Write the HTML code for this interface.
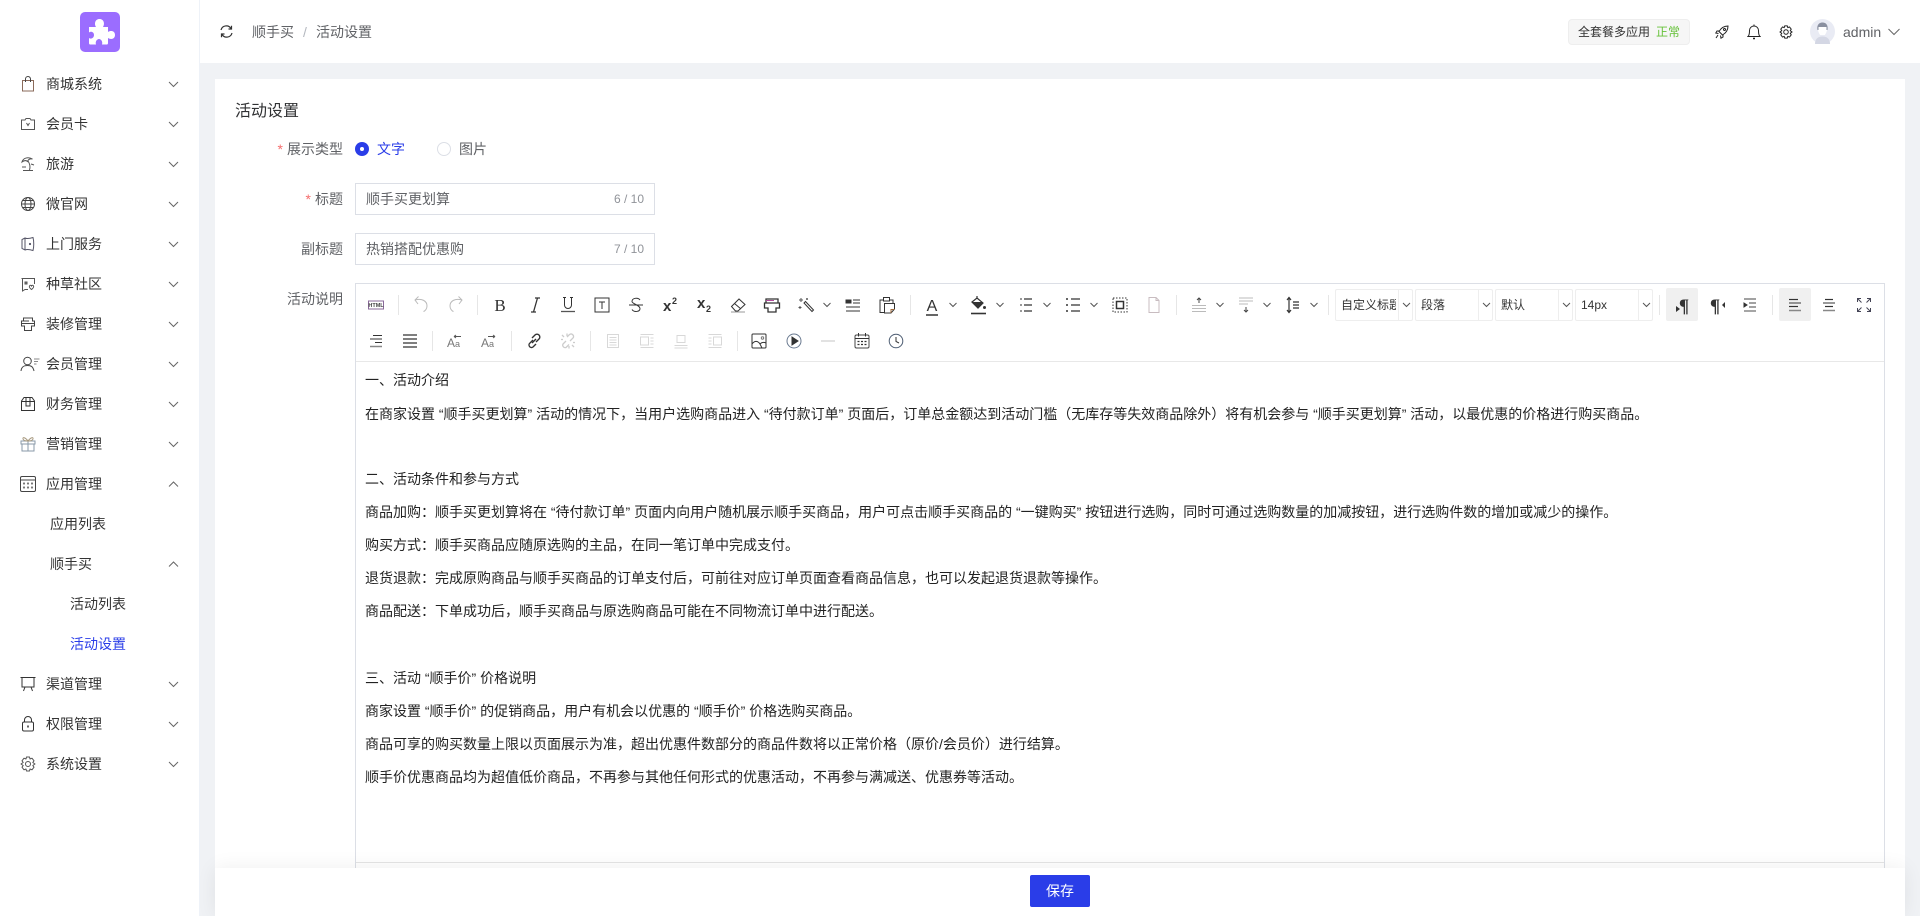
<!DOCTYPE html>
<html lang="zh"><head><meta charset="utf-8"><title>活动设置</title>
<style>
*{box-sizing:border-box}
html,body{margin:0;padding:0;width:1920px;height:916px;overflow:hidden;background:#f0f2f5;font-family:"Liberation Sans","Noto Sans CJK SC",sans-serif;font-size:14px;color:#303133}
.abs{position:absolute}
#side{position:absolute;left:0;top:0;width:200px;height:916px;background:#fff;border-right:1px solid #eef2f8}
#logo{position:absolute;left:80px;top:12px;width:40px;height:40px;border-radius:5px;background:#9b6dff}
.mi{position:absolute;left:0;width:199px;height:40px;line-height:40px;color:#333;font-size:14px;white-space:nowrap}
.mi span{position:absolute;top:0}
.mi svg{position:absolute}
.mi .ic{left:20px;top:12px}
.mi .ch{left:168px;top:16px}
#head{position:absolute;left:200px;top:0;width:1720px;height:63px;background:#fff}
#card{position:absolute;left:215px;top:79px;width:1690px;height:837px;background:#fff}
.lb{position:absolute;right:1577px;color:#606266;font-size:14px;line-height:20px;white-space:nowrap}
.lb i{color:#f56c6c;font-style:normal;margin-right:4px}
.inp{position:absolute;left:355px;width:300px;height:32px;border:1px solid #dcdfe6;background:#fff;color:#606266;line-height:30px;padding-left:10px}
.inp b{position:absolute;right:10px;top:0;font-weight:normal;font-size:12px;color:#909399}
#ed{position:absolute;left:355px;top:283px;width:1530px;height:633px;border:1px solid #dcdfe6;background:#fff}
#ed .bar{position:absolute;left:0;top:77px;width:100%;height:1px;background:#e8e8e8}
#ed .bot{position:absolute;left:0;top:578px;width:100%;height:1px;background:#e5e5e5}
.p{position:absolute;left:365px;font-size:14px;line-height:20px;color:#222;white-space:nowrap}
.sel{position:absolute;top:289px;height:32px;border:1px solid #eee;border-radius:2px;background:#fff;font-size:12px;line-height:30px;color:#333;overflow:hidden}
.sel span{position:absolute;left:5px;top:0;width:55px;overflow:hidden;white-space:nowrap}
.sel u{position:absolute;right:13px;top:0;width:1px;height:30px;background:#eee;display:block}
.act{position:absolute;top:288px;width:32px;height:33px;background:#f0f0f0;border-radius:2px}
#foot{position:absolute;left:215px;top:868px;width:1690px;height:48px;background:#fff;box-shadow:0 0 20px rgba(0,0,0,.07)}
#save{position:absolute;left:815px;top:7px;width:60px;height:32px;background:#2a3de8;color:#fff;border-radius:2px;text-align:center;line-height:32px;font-size:14px}
svg text{font-family:"Liberation Sans","Noto Sans CJK SC",sans-serif}
</style></head><body>

<svg width="0" height="0" style="position:absolute"><defs>
<path id="cd" d="M1 2 L5.500 6.500 L10 2" fill="none" stroke="#666" stroke-width="1"/>
<path id="cu" d="M1 6.500 L5.500 2 L10 6.500" fill="none" stroke="#666" stroke-width="1"/>
</defs></svg>

<div id="side">
<div id="logo"><svg width="40" height="40" viewBox="0 0 40 40"><path fill="#fff" d="M9 15 H16 C14 12 15 7 19.500 7 C24 7 25 12 23 15 H28 V20 C31 18 35 19 35 23 C35 27 31 28 28 26 V31 C28 32 27.500 32.500 27 32.500 H22 C23 29.500 21 27 19 27 C17 27 15 29.500 16 32.500 H10 C9.500 32.500 9 32 9 31 V26 C11 27.500 14 26 14 23 C14 20 11 19 9 20.500 Z"/></svg></div>

<div class="mi" style="top:64px"><svg class="ic" width="16" height="16" viewBox="0 0 16 16" fill="none" stroke="#8a6a5a"><path d="M2.500 4.500 H13.500 V15 H2.500 Z"/><path d="M5.500 6 V3 A2.500 2.500 0 0 1 10.500 3 V6" stroke="#444"/></svg><span style="left:46px">商城系统</span><svg class="ch" width="11" height="9"><use href="#cd"/></svg></div>

<div class="mi" style="top:104px"><svg class="ic" width="16" height="16" viewBox="0 0 16 16" fill="none" stroke="#555"><path d="M1.500 4 H5 L6 2.500 H10 L11 4 H14.500 V13.500 H1.500 Z"/><path d="M6.500 7 L8 9.500 L9.500 7"/></svg><span style="left:46px">会员卡</span><svg class="ch" width="11" height="9"><use href="#cd"/></svg></div>

<div class="mi" style="top:144px"><svg class="ic" width="16" height="16" viewBox="0 0 16 16" fill="none" stroke="#555"><path d="M2 6 C3 2 8 0.500 12.500 3 C9.500 2.500 8 4 7.500 5.500 C6 4 4 4.500 2 6 Z"/><path d="M8 5 C10 8 10.500 11 9.500 14 M3 14.500 H13 M2 11 H6 M11 8 L14 9"/></svg><span style="left:46px">旅游</span><svg class="ch" width="11" height="9"><use href="#cd"/></svg></div>

<div class="mi" style="top:184px"><svg class="ic" width="16" height="16" viewBox="0 0 16 16" fill="none" stroke="#444"><circle cx="8" cy="8" r="6.500"/><ellipse cx="8" cy="8" rx="3" ry="6.500"/><path d="M1.500 8 H14.500 M2.500 4.500 H13.500 M2.500 11.500 H13.500"/></svg><span style="left:46px">微官网</span><svg class="ch" width="11" height="9"><use href="#cd"/></svg></div>

<div class="mi" style="top:224px"><svg class="ic" width="16" height="16" viewBox="0 0 16 16" fill="none" stroke="#556"><path d="M5 2 L2 3.500 V12.500 L5 14 C7 13 10 13.500 13 14.500 C14 11 14 5 13 1.500 C10 2.500 7 3 5 2 Z M5 2 V14"/><circle cx="10" cy="8" r=".6" fill="#333"/></svg><span style="left:46px">上门服务</span><svg class="ch" width="11" height="9"><use href="#cd"/></svg></div>

<div class="mi" style="top:264px"><svg class="ic" width="16" height="16" viewBox="0 0 16 16" fill="none" stroke="#555"><path d="M1.500 2.500 H14.500 V8 M8 13.500 H5 L2.500 15 V2.500"/><path d="M5 6 H7 V8 H5 Z" fill="#888"/><path d="M11.500 13.500 C9.500 12 9 11 9.500 10 C10 9 11 9 11.500 10 C12 9 13 9 13.500 10 C14 11 13.500 12 11.500 13.500 Z"/></svg><span style="left:46px">种草社区</span><svg class="ch" width="11" height="9"><use href="#cd"/></svg></div>

<div class="mi" style="top:304px"><svg class="ic" width="16" height="16" viewBox="0 0 16 16" fill="none" stroke="#444"><path d="M3.500 2 H12.500 V5 H14.500 V10 H11.500 V14.500 H4.500 V10 H1.500 V5 H3.500 Z"/><path d="M3.500 5 H9 M1.500 7.500 H14.500"/></svg><span style="left:46px">装修管理</span><svg class="ch" width="11" height="9"><use href="#cd"/></svg></div>

<div class="mi" style="top:344px"><svg class="ic" width="20" height="16" viewBox="0 0 20 16" fill="none" stroke="#444" style="left:20px"><circle cx="7.500" cy="5" r="3.800"/><path d="M1 15 C1.500 10.500 4 9.500 7.500 9.500 C11 9.500 13 10.500 14 15"/><path d="M14 3 H19.500 M14 5.500 H18 M14 8 H16.500" stroke="#888"/></svg><span style="left:46px">会员管理</span><svg class="ch" width="11" height="9"><use href="#cd"/></svg></div>

<div class="mi" style="top:384px"><svg class="ic" width="16" height="16" viewBox="0 0 16 16" fill="none" stroke="#333"><path d="M1.500 5 L4 1.500 H12 L14.500 5 V14.500 H1.500 Z M1.500 5.500 H14.500"/><path d="M6 1.500 V10 H10 V1.500"/></svg><span style="left:46px">财务管理</span><svg class="ch" width="11" height="9"><use href="#cd"/></svg></div>

<div class="mi" style="top:424px"><svg class="ic" width="16" height="16" viewBox="0 0 16 16" fill="none" stroke="#8a9aa8" style="left:20px"><path d="M1 5 H15 V8 H1 Z M2 8 V15 H14 V8 M8 5 V15"/><path d="M8 5 C5 1 2.500 1 3 3 C3.500 4.500 6 5 8 5 C10 5 12.500 4.500 13 3 C13.500 1 11 1 8 5 Z" stroke="#a89a80"/></svg><span style="left:46px">营销管理</span><svg class="ch" width="11" height="9"><use href="#cd"/></svg></div>

<div class="mi" style="top:464px"><svg class="ic" width="16" height="16" viewBox="0 0 16 16" fill="none" stroke="#444" style="left:20px"><rect x=".5" y=".5" width="15" height="15" rx="1.500"/><path d="M.5 4 H15.500"/><g fill="#777" stroke="none"><circle cx="4" cy="7.500" r="1.100"/><circle cx="8" cy="7.500" r="1.100"/><circle cx="12" cy="7.500" r="1.100"/><circle cx="4" cy="11.500" r="1.100"/><circle cx="8" cy="11.500" r="1.100"/><circle cx="12" cy="11.500" r="1.100"/></g></svg><span style="left:46px">应用管理</span><svg class="ch" width="11" height="9"><use href="#cu"/></svg></div>

<div class="mi" style="top:504px"><span style="left:50px">应用列表</span></div>
<div class="mi" style="top:544px"><span style="left:50px">顺手买</span><svg class="ch" width="11" height="9"><use href="#cu"/></svg></div>
<div class="mi" style="top:584px"><span style="left:70px">活动列表</span></div>
<div class="mi" style="top:624px;color:#2a3de8"><span style="left:70px">活动设置</span></div>

<div class="mi" style="top:664px"><svg class="ic" width="16" height="16" viewBox="0 0 16 16" fill="none" stroke="#333"><path d="M.5 1.500 H15.500 M2 1.500 V11 H14 V1.500 M5 11 L3.500 15 M11 11 L12.500 15"/></svg><span style="left:46px">渠道管理</span><svg class="ch" width="11" height="9"><use href="#cd"/></svg></div>

<div class="mi" style="top:704px"><svg class="ic" width="16" height="16" viewBox="0 0 16 16" fill="none" stroke="#333"><rect x="2.500" y="6" width="11" height="9" rx="1.500"/><path d="M4.500 6 V4 A3.500 3.500 0 0 1 11.500 4 V6"/><path d="M8 9.500 V11.500" stroke-width="1.500"/></svg><span style="left:46px">权限管理</span><svg class="ch" width="11" height="9"><use href="#cd"/></svg></div>

<div class="mi" style="top:744px"><svg class="ic" width="16" height="16" viewBox="0 0 16 16" fill="none" stroke="#555"><path d="M6.500 1 H9.500 L10 3 L12 2.200 L14 4.800 L12.800 6.500 L15 8 L12.800 9.500 L14 11.200 L12 13.800 L10 13 L9.500 15 H6.500 L6 13 L4 13.800 L2 11.200 L3.200 9.500 L1 8 L3.200 6.500 L2 4.800 L4 2.200 L6 3 Z" stroke-linejoin="round"/><circle cx="8" cy="8" r="2.500"/></svg><span style="left:46px">系统设置</span><svg class="ch" width="11" height="9"><use href="#cd"/></svg></div>
</div>

<div id="head">
<svg class="abs" style="left:20px;top:25px" width="13" height="13" viewBox="0 0 13 13" fill="none" stroke="#333" stroke-width="1.200"><path d="M1 5 A5.500 5.500 0 0 1 11 3.500"/><path d="M12 8 A5.500 5.500 0 0 1 2 9.500"/><path d="M11.500 .8 V4 H8.500"/><path d="M1.500 12.200 V9 H4.500"/></svg>
<span class="abs" style="left:52px;top:22px;line-height:20px;color:#606266">顺手买</span>
<span class="abs" style="left:103px;top:22px;line-height:20px;color:#b4b8bf">/</span>
<span class="abs" style="left:116px;top:22px;line-height:20px;color:#606266">活动设置</span>

<div class="abs" style="left:1368px;top:19px;width:122px;height:26px;background:#f6f6f6;border:1px solid #eeeeee;border-radius:4px;font-size:12px;line-height:24px;color:#333;padding-left:9px;white-space:nowrap">全套餐多应用<span style="color:#67c23a;margin-left:6px">正常</span></div>

<svg class="abs" style="left:1515px;top:25px" width="14" height="14" viewBox="0 0 14 14" fill="none" stroke="#222"><path d="M13 1 C9 1 6 3 4 6.500 L7.500 10 C11 8 13 5 13 1 Z"/><circle cx="9.500" cy="4.500" r="1"/><path d="M4.500 6 H2 L.8 8 L3.500 8.500 M8 9.500 V12 L6 13.200 L5.500 10.500 M3 10 L1 13"/></svg>
<svg class="abs" style="left:1547px;top:24px" width="14" height="16" viewBox="0 0 14 16" fill="none" stroke="#222"><path d="M1 12.500 H13 C11.800 11.500 11.500 10 11.500 6.500 A4.500 4.500 0 0 0 2.500 6.500 C2.500 10 2.200 11.500 1 12.500 Z"/><path d="M7 0.500 V2"/><path d="M6 14.500 H8" stroke-width="1.500"/></svg>
<svg class="abs" style="left:1579px;top:25px" width="14" height="14" viewBox="0 0 16 16" fill="none" stroke="#222" stroke-width="1.100"><path d="M6.500 1 H9.500 L10 3 L12 2.200 L14 4.800 L12.800 6.500 L15 8 L12.800 9.500 L14 11.200 L12 13.800 L10 13 L9.500 15 H6.500 L6 13 L4 13.800 L2 11.200 L3.200 9.500 L1 8 L3.200 6.500 L2 4.800 L4 2.200 L6 3 Z" stroke-linejoin="round"/><circle cx="8" cy="8" r="2.600"/></svg>
<svg class="abs" style="left:1610px;top:19px" width="25" height="25" viewBox="0 0 25 25"><circle cx="12.500" cy="12.500" r="12.500" fill="#e9ebf4"/><path d="M8 6 C9 4 16 4 17 6 L17 11 C16.500 14 15 15.500 15 16 L10 16 C10 15.500 8.500 14 8 11 Z" fill="#fff"/><path d="M7.500 11 C6.500 5 10 3.500 12.500 3.500 C15 3.500 18.500 5 17.500 11 L16.500 11 V8 C14 8 11 8 8.500 8 V11 Z" fill="#8a90a0"/><path d="M5 25 C5 19 9 17.500 12.500 17.500 C16 17.500 20 19 20 25 Z" fill="#d4d7e4"/></svg>
<span class="abs" style="left:1643px;top:22px;line-height:20px;color:#606266">admin</span>
<svg class="abs" style="left:1688px;top:28px" width="12" height="8" viewBox="0 0 12 8" fill="none" stroke="#666"><path d="M.5 1 L6 6.500 L11.500 1"/></svg>
</div>

<div id="card"></div>
<div class="abs" style="left:235px;top:100px;font-size:16px;line-height:24px;color:#303133">活动设置</div>

<div class="lb" style="top:139px"><i>*</i>展示类型</div>
<div class="abs" style="left:355px;top:142px;width:14px;height:14px;border-radius:50%;background:#2a3de8"></div>
<div class="abs" style="left:360px;top:147px;width:4px;height:4px;border-radius:50%;background:#fff"></div>
<span class="abs" style="left:377px;top:139px;line-height:20px;color:#2a3de8">文字</span>
<div class="abs" style="left:437px;top:142px;width:14px;height:14px;border-radius:50%;border:1px solid #dcdfe6"></div>
<span class="abs" style="left:459px;top:139px;line-height:20px;color:#606266">图片</span>

<div class="lb" style="top:189px"><i>*</i>标题</div>
<div class="inp" style="top:183px">顺手买更划算<b>6 / 10</b></div>
<div class="lb" style="top:239px">副标题</div>
<div class="inp" style="top:233px">热销搭配优惠购<b>7 / 10</b></div>
<div class="lb" style="top:289px">活动说明</div>

<div id="ed"><div class="bar"></div><div class="bot"></div></div>

<div class="act" style="left:1666px"></div>
<div class="act" style="left:1779px"></div>

<div class="sel" style="left:1335px;width:78px"><span>自定义标题</span><u></u></div>
<div class="sel" style="left:1415px;width:78px"><span>段落</span><u></u></div>
<div class="sel" style="left:1495px;width:78px"><span>默认</span><u></u></div>
<div class="sel" style="left:1575px;width:78px"><span>14px</span><u></u></div>

<svg class="abs" style="left:0;top:0" width="1920" height="916" fill="none" stroke="#333" stroke-width="1">
<!-- separators -->
<g stroke="#e6e6e6"><path d="M398.500 295 V315 M477.500 295 V315 M910.500 295 V315 M1176.500 295 V315 M1328.500 295 V315 M1659.500 295 V315 M1772.500 295 V315 M432.500 331 V351 M511.500 331 V351 M590.500 331 V351 M737.500 331 V351"/></g>
<!-- chevrons -->
<g stroke="#555"><path d="M823.500 303 L827 306.500 L830.500 303 M949.500 303 L953 306.500 L956.500 303 M996.500 303 L1000 306.500 L1003.500 303 M1043.500 303 L1047 306.500 L1050.500 303 M1090.500 303 L1094 306.500 L1097.500 303 M1216.500 303 L1220 306.500 L1223.500 303 M1263.500 303 L1267 306.500 L1270.500 303 M1310.500 303 L1314 306.500 L1317.500 303 M1403 303 L1406.500 306.500 L1410 303 M1483 303 L1486.500 306.500 L1490 303 M1563 303 L1566.500 306.500 L1570 303 M1643 303 L1646.500 306.500 L1650 303"/></g>

<!-- row 1 -->
<g transform="translate(376,305)"><rect x="-7.500" y="-4" width="15" height="8" stroke="#8a6a9a"/><text x="0" y="2.200" font-size="5.500" font-weight="700" text-anchor="middle" fill="#444" stroke="none">HTML</text></g>
<g transform="translate(421,305)" stroke="#bbb"><path d="M-6 -5 C1 -7 6 -4 6 1 C6 4 4 6 2.500 6.500"/><path d="M-2.500 -8.500 L-6 -5 L-3 -1"/></g>
<g transform="translate(456,305)" stroke="#bbb"><path d="M6 -5 C-1 -7 -6 -4 -6 1 C-6 4 -4 6 -2.500 6.500"/><path d="M2.500 -8.500 L6 -5 L3 -1"/></g>
<text x="500" y="311" font-size="17" text-anchor="middle" fill="#333" stroke="none" style="font-family:'Liberation Serif',serif">B</text>
<path d="M531 312 H536 M535 298 H540 M537.500 298 L533.500 312" stroke-width="1.300"/>
<g transform="translate(568,305)"><path d="M-5 -7.500 H-2 M2 -7.500 H5 M-3.500 -7.500 V0 A3.500 3.500 0 0 0 3.500 0 V-7.500"/><path d="M-7 6.500 H7" stroke="#555" stroke-width="1.300"/></g>
<g transform="translate(602,305)"><rect x="-7" y="-7" width="14" height="14"/><path d="M-3 -3 H3 M0 -3 V4"/></g>
<g transform="translate(636,305)"><path d="M4 -5 C2 -8 -4 -7 -4 -3.500 C-4 -1 4 0 4 3.500 C4 7 -2 7.500 -4 4.500"/><path d="M-7 0 H7"/></g>
<text x="663" y="311" font-size="15" font-weight="700" fill="#333" stroke="none">x</text><text x="672" y="304" font-size="9" font-weight="700" fill="#333" stroke="none">2</text>
<text x="697" y="308" font-size="15" font-weight="700" fill="#333" stroke="none">x</text><text x="706" y="312" font-size="9" font-weight="700" fill="#333" stroke="none">2</text>
<g transform="translate(738,305)"><path d="M-6.500 1.500 L1 -6 L7 -0.500 L0 6 H-2.500 Z M-3.500 -1.500 L3 4"/><path d="M-7 7 H7" stroke="#999"/></g>

<g transform="translate(772,305)"><path d="M-6 -2 V-6 H6 V-2 M-7.500 -2 H7.500 V3 H4 V7 H-4 V3 H-7.500 Z" stroke-width="1.300"/><path d="M-6 -4.500 H2" stroke="#b04a9a"/></g>
<g transform="translate(806,305)"><path d="M-2 -2 L6 6.500 L7.500 5 L-0.500 -3.500 Z"/><path d="M-5 -7 V-3 M-7 -5 H-3 M-6 1 V4 M-7.500 2.500 H-4.500 M1 -7 V-5 M0 -6 H2" stroke="#555"/></g>
<g transform="translate(853,305)"><path d="M-7 -5 H-5 V-2 H-7 Z M-4 -5 H-2 V-2 H-4 Z" fill="#333"/><path d="M0 -5 H7 M0 -2 H7 M-7 2 H7 M-7 6 H7"/></g>
<g transform="translate(887,305)"><path d="M-2 7.500 H-7 V-5 H-3 M3 -5 H6 V-2" /><rect x="-3.500" y="-7.500" width="6" height="3.500"/><path d="M-2.500 -1.500 H7.500 V4 L4 8 H-2.500 Z"/><path d="M4 8 V4.500 H7.500" stroke="#a06a3a"/></g>

<text x="932" y="311" font-size="16" text-anchor="middle" fill="#333" stroke="none">A</text><path d="M926 315 H938" stroke-width="1.500"/>
<g transform="translate(978,305)"><path d="M-1 -9 L-1 -6 M-6 -3 L-1 -7 L5 -2 L0 3 L-6 -3 Z" stroke-width="1.200"/><path d="M-5.500 -2.500 H4 L0 3 Z" fill="#333"/><circle cx="6.500" cy="2.500" r="1.500" fill="#333" stroke="none"/><path d="M-7 8.500 H8" stroke-width="1.600"/></g>
<g transform="translate(1026,305)"><path d="M-2 -6 H6 M-2 0 H6 M-2 6 H6" stroke-width="1.300"/><path d="M-6 -6 H-4 M-6 0 H-4 M-6 6 H-4" stroke-width="1.500" stroke="#777"/></g>
<g transform="translate(1073,305)"><path d="M-2 -6 H7 M-2 0 H7 M-2 6 H7" stroke-width="1.200"/><path d="M-7 -6 H-5 M-7 0 H-5 M-7 6 H-5" stroke-width="1.500"/></g>
<g transform="translate(1120,305)"><rect x="-7" y="-7" width="14" height="14" stroke-dasharray="1.500 1.500"/><rect x="-3.500" y="-3.500" width="7" height="7" stroke-width="1.500"/></g>
<g transform="translate(1154,305)"><path d="M-5 -7.500 H2 L5 -4.500 V7.500 H-5 Z M2 -7.500 V-4.500 H5" stroke="#c8bcc0"/></g>

<g transform="translate(1199,305)" stroke="#bbb"><path d="M-7 0.500 H7 M-7 3.500 H7 M-7 6.500 H7"/><path d="M0 -7 V-2 M-2 -5 L0 -7 L2 -5" stroke="#444"/></g>
<g transform="translate(1246,305)" stroke="#bbb"><path d="M-7 -7 H7 M-7 -4 H7 M-7 -1 H2"/><path d="M0 2 V7 M-2 5 L0 7 L2 5" stroke="#444"/></g>
<g transform="translate(1293,305)"><path d="M-4 -7 V7 M-6 -5 L-4 -7.500 L-2 -5 M-6 5 L-4 7.500 L-2 5" stroke-width="1.200"/><path d="M0 -3 H6 M0 0 H6 M0 3 H6" stroke-width="1.300"/></g>

<text x="1684" y="312" font-size="19" font-weight="700" text-anchor="middle" fill="#333" stroke="none" style="font-family:'Liberation Serif',serif">¶</text><path d="M1680 309 L1676 306 V312 Z" fill="#333" stroke="none"/>
<text x="1715" y="312" font-size="19" font-weight="700" text-anchor="middle" fill="#333" stroke="none" style="font-family:'Liberation Serif',serif">¶</text><path d="M1722 305 L1725 302 V308 Z" fill="#333" stroke="none"/>
<g transform="translate(1750,305)"><path d="M-6 -6 H6 M-1 -2 H6 M-1 2 H6" stroke="#444"/><path d="M-6 6 H6" stroke="#888" stroke-width="1.500"/><path d="M-6 -2 L-3 0 L-6 2 Z" fill="#333"/></g>

<g transform="translate(1795,305)"><path d="M-6 -5.500 H3" stroke-width="1.200"/><path d="M-6 -2 H6" stroke="#555" stroke-width="1.200"/><path d="M-6 1.500 H3" stroke-width="1.200"/><path d="M-6 5.500 H6" stroke="#888" stroke-width="1.500"/></g>
<g transform="translate(1829,305)"><path d="M-4 -5.500 H4" stroke-width="1.200"/><path d="M-6 -2 H6" stroke-width="1.200" stroke="#555"/><path d="M-4 1.500 H4" stroke-width="1.200"/><path d="M-6 5.500 H6" stroke="#888" stroke-width="1.500"/></g>
<g transform="translate(1864,305)" stroke="#445"><path d="M-6.500 -3 V-6.500 H-3 M-6.500 -6.500 L-2.500 -2.500 M3 -6.500 H6.500 V-3 M6.500 -6.500 L2.500 -2.500 M-6.500 3 V6.500 H-3 M-6.500 6.500 L-2.500 2.500 M3 6.500 H6.500 V3 M6.500 6.500 L2.500 2.500"/></g>

<!-- row 2 -->
<g transform="translate(376,341)"><path d="M-3 -5.500 H6 M-6 -2 H6 M-1 1.500 H6"/><path d="M-6 5.500 H6" stroke="#888" stroke-width="1.500"/></g>
<g transform="translate(410,341)" stroke-width="1.300"><path d="M-7 -6 H7 M-7 -2 H7 M-7 2 H7 M-7 6 H7"/></g>
<g transform="translate(455,341)"><text x="-8" y="6" font-size="12" fill="#777" stroke="none">A</text><text x="0" y="6" font-size="9" fill="#777" stroke="none">a</text><path d="M-1 -4.500 H6 M-1 -4.500 L1 -6 M-1 -4.500 L1 -3" stroke="#555"/></g>
<g transform="translate(489,341)"><text x="-8" y="6" font-size="12" fill="#777" stroke="none">A</text><text x="0" y="6" font-size="9" fill="#777" stroke="none">a</text><path d="M-1 -4.500 H6 M6 -4.500 L4 -6 M6 -4.500 L4 -3" stroke="#555"/></g>
<g transform="translate(534,341)" stroke-width="1.400"><path d="M-1 -1 L-4 2 A2.500 2.500 0 0 0 -1 6 L2 3"/><path d="M2 1 L5 -2 A2.500 2.500 0 0 0 1 -6 L-2 -3"/><path d="M-2 2 L2 -2"/></g>
<g transform="translate(568,341)" stroke="#ccc" stroke-width="1.300"><path d="M-2 0 L-5 3 A2.500 2.500 0 0 0 -2 6.500 L1 3.500"/><path d="M2 0 L5 -3 A2.500 2.500 0 0 0 1.500 -6.500 L-1 -4"/><path d="M-6 -6 L-4 -4 M-1 -7.500 V-5 M-7 -1.500 H-5 M6 6 L4 4 M1 7.500 V5 M7 1.500 H5"/></g>
<g stroke="#d8d8d8"><g transform="translate(613,341)"><rect x="-5.500" y="-6.500" width="11" height="13"/><path d="M-3.500 -3.500 H3.500 M-3.500 -1 H3.500 M-3.500 1.500 H3.500 M-3.500 4 H3.500"/></g>
<g transform="translate(647,341)"><rect x="-6.500" y="-4" width="8" height="8"/><path d="M-6.500 -6.500 H6.500 M3.500 -3 H6.500 M3.500 0 H6.500 M3.500 3 H6.500 M-6.500 6.500 H6.500"/></g>
<g transform="translate(681,341)"><rect x="-4" y="-5.500" width="8" height="7"/><path d="M-6.500 4.500 H6.500 M-6.500 7 H6.500"/></g>
<g transform="translate(715,341)"><rect x="-1.500" y="-4" width="8" height="8"/><path d="M-6.500 -6.500 H6.500 M-6.500 -3 H-3.500 M-6.500 0 H-3.500 M-6.500 3 H-3.500 M-6.500 6.500 H6.500"/></g></g>
<g transform="translate(759,341)"><rect x="-7" y="-7" width="14" height="14" rx="1"/><path d="M-7 3 C-4 -1 -1 0 1 3 L3 7 M1 3 C3 1 5 1 7 2"/><circle cx="3.500" cy="-3" r="1.200" stroke="#777"/></g>
<g transform="translate(794,341)"><circle cx="0" cy="0" r="7" stroke="#6a7a90"/><path d="M-2 -4 L4 0 L-2 4 Z" fill="#333"/></g>
<path d="M821 341 H835" stroke="#d8d8d8" stroke-width="1.500"/>
<g transform="translate(862,341)"><rect x="-7" y="-6" width="14" height="13" rx="1.500" stroke="#444"/><path d="M-7 -2.500 H7 M-3.500 -8 V-4.500 M3.500 -8 V-4.500"/><path d="M-4.500 0.500 H-2.500 M-1 0.500 H1 M2.500 0.500 H4.500 M-4.500 3.500 H-2.500 M-1 3.500 H1 M2.500 3.500 H4.500" stroke-width="1.300"/></g>
<g transform="translate(896,341)"><circle cx="0" cy="0" r="6.800" stroke="#4a5a70"/><path d="M0 -4 V0.500 L3 2"/></g>
</svg>

<div class="p" style="top:370px">一、活动介绍</div>
<div class="p" style="top:404px">在商家设置 “顺手买更划算” 活动的情况下，当用户选购商品进入 “待付款订单” 页面后，订单总金额达到活动门槛（无库存等失效商品除外）将有机会参与 “顺手买更划算” 活动，以最优惠的价格进行购买商品。</div>
<div class="p" style="top:469px">二、活动条件和参与方式</div>
<div class="p" style="top:502px">商品加购：顺手买更划算将在 “待付款订单” 页面内向用户随机展示顺手买商品，用户可点击顺手买商品的 “一键购买” 按钮进行选购，同时可通过选购数量的加减按钮，进行选购件数的增加或减少的操作。</div>
<div class="p" style="top:535px">购买方式：顺手买商品应随原选购的主品，在同一笔订单中完成支付。</div>
<div class="p" style="top:568px">退货退款：完成原购商品与顺手买商品的订单支付后，可前往对应订单页面查看商品信息，也可以发起退货退款等操作。</div>
<div class="p" style="top:601px">商品配送：下单成功后，顺手买商品与原选购商品可能在不同物流订单中进行配送。</div>
<div class="p" style="top:668px">三、活动 “顺手价” 价格说明</div>
<div class="p" style="top:701px">商家设置 “顺手价” 的促销商品，用户有机会以优惠的 “顺手价” 价格选购买商品。</div>
<div class="p" style="top:734px">商品可享的购买数量上限以页面展示为准，超出优惠件数部分的商品件数将以正常价格（原价/会员价）进行结算。</div>
<div class="p" style="top:767px">顺手价优惠商品均为超值低价商品，不再参与其他任何形式的优惠活动，不再参与满减送、优惠券等活动。</div>

<div id="foot"><div id="save">保存</div></div>
</body></html>
